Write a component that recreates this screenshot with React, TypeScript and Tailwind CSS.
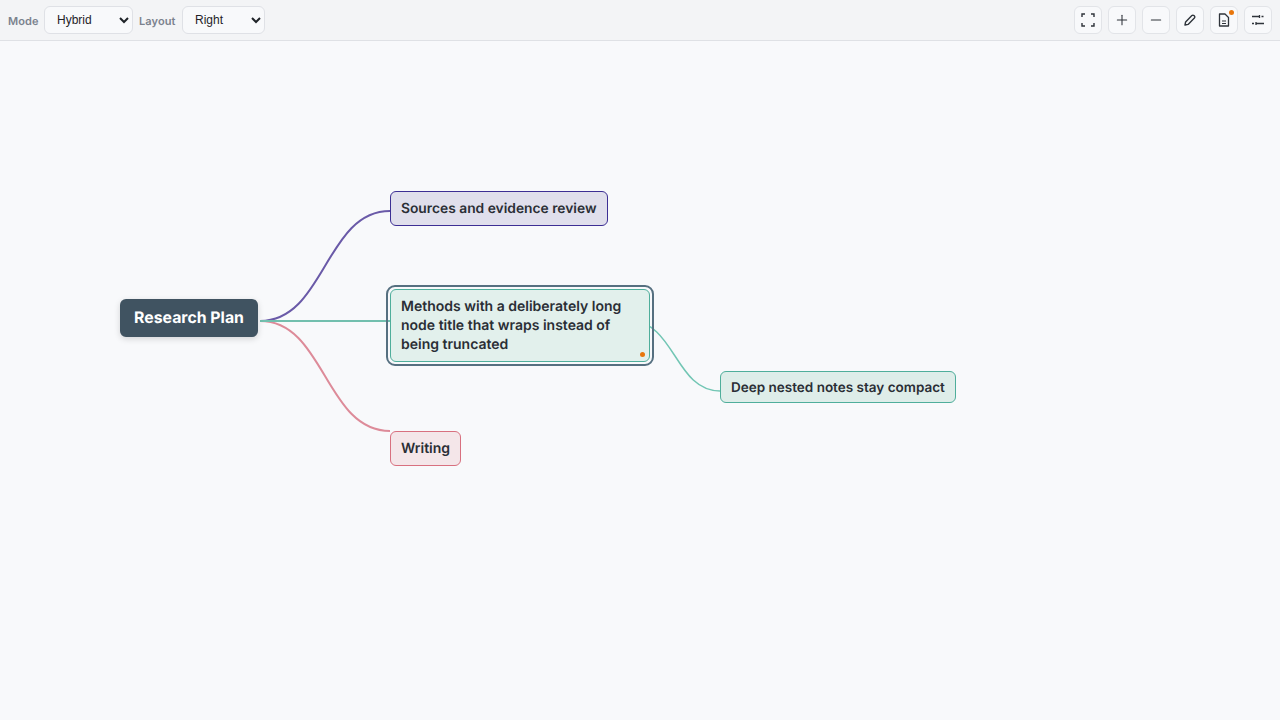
import React from "react";
import { Plus, Minus } from "lucide-react";

const btn = "relative w-[28px] h-[28px] flex items-center justify-center rounded-md border border-[#e2e4e8] bg-[#f8f9fb] text-[#2f343b]";
const sel = "h-[28px] rounded-md border border-[#dfe1e6] bg-[#f8f9fb] text-[12px] text-[#1f2328] pl-2 pr-0.5 font-['Liberation_Sans',sans-serif]";
const lab = "text-[11px] font-semibold text-[#7b828e] mt-[4px] tracking-[0.01em]";
const node = "absolute rounded-md border font-semibold text-[#2a2e35] leading-[19px] px-[10px]";

export default function App() {
  return (
    <div className="w-[1280px] h-[720px] flex flex-col overflow-hidden bg-[#f8f9fb] font-['Inter',sans-serif] [text-rendering:geometricPrecision] antialiased">
      <div className="h-[41px] shrink-0 flex items-center justify-between px-2 pb-px bg-[#f3f4f6] border-b border-[#dfe1e5]">
        <div className="flex items-center gap-1.5">
          <span className={`${lab} w-[30px]`}>Mode</span>
          <select className={`${sel} w-[89px]`} defaultValue="Hybrid"><option>Hybrid</option><option>Outline</option></select>
          <span className={`${lab} w-[37px]`}>Layout</span>
          <select className={`${sel} w-[83px]`} defaultValue="Right"><option>Right</option><option>Left</option></select>
        </div>
        <div className="flex items-center gap-1.5">
          <button className={btn}>
            <svg width="14" height="14" viewBox="0 0 14 14" fill="none" stroke="currentColor" strokeWidth="1.4">
              <path d="M1 4V1H4M10 1H13V4M13 10V13H10M4 13H1V10" />
            </svg>
          </button>
          <button className={btn}><Plus size={16} strokeWidth={1.6} /></button>
          <button className={btn}><Minus size={16} strokeWidth={1.6} /></button>
          <button className={btn}>
            <svg width="14" height="14" viewBox="0 0 14 14" fill="none" stroke="currentColor" strokeWidth="1.4" strokeLinejoin="round">
              <path d="M2 12L2.6 8.9L8.9 2.6A1.4 1.4 0 0 1 10.9 2.6L11.4 3.1A1.4 1.4 0 0 1 11.4 5.1L5.1 11.4Z" />
            </svg>
          </button>
          <button className={btn}>
            <svg width="14" height="14" viewBox="0 0 14 14" fill="none" stroke="currentColor" strokeWidth="1.3" strokeLinejoin="round">
              <path d="M2.5 1H8L11.5 4.5V13H2.5Z" />
              <path d="M5 8H9M5 10.5H9" strokeWidth="1.1" />
            </svg>
            <span className="absolute top-[3px] right-[3px] w-[5px] h-[5px] rounded-full bg-[#e8760c]" />
          </button>
          <button className={btn}>
            <svg width="14" height="14" viewBox="0 0 14 14" fill="none" stroke="currentColor" strokeWidth="1.3">
              <path d="M1 3.5H8M8.5 2V5M10.5 3.5H12.5" />
              <path d="M1 10.5H3M5 9V12M5.5 10.5H13" />
            </svg>
          </button>
        </div>
      </div>
      <div className="relative flex-1">
        <svg className="absolute left-0 top-0" width="1280" height="679" viewBox="0 41 1280 679" fill="none">
          <path d="M260 321C325 321 325 211 390 211" stroke="#6a5aa8" strokeWidth="2" />
          <path d="M260 321C325 321 325 431 390 431" stroke="#dd8b99" strokeWidth="2" />
          <path d="M260 321H390" stroke="#72bfae" strokeWidth="2" />
          <path d="M630 321C675 321 675 391 720 391" stroke="#72c6b4" strokeWidth="1.5" />
        </svg>
        <div className="absolute left-[120px] top-[258px] w-[138px] h-[38px] rounded-md bg-[#405361] text-white text-[15.85px] font-bold flex items-center justify-center pb-px shadow-[0_2px_6px_rgba(0,0,0,0.15)]">Research Plan</div>
        <div className={`${node} left-[390px] top-[150px] h-[35px] flex items-center pt-px text-[13.8px] border-[#3d2f94] bg-[#e0dfec]`}>Sources and evidence review</div>
        <div className="absolute left-[386px] top-[244px] w-[268px] h-[81px] rounded-[9px] border-2 border-[#567080]" />
        <div className={`${node} left-[390px] top-[248px] w-[260px] h-[73px] pt-[6.5px] text-[14px] border-[#4fae9b] bg-[#e2f0ec]`}>
          Methods with a deliberately long node title that wraps instead of being truncated
          <span className="absolute right-[4px] bottom-[4px] w-[5px] h-[5px] rounded-full bg-[#e8760c]" />
        </div>
        <div className={`${node} left-[720px] top-[330px] h-[32px] flex items-center pt-[2px] text-[13.5px] border-[#4fae9b] bg-[#deede9]`}>Deep nested notes stay compact</div>
        <div className={`${node} left-[390px] top-[390px] h-[35px] flex items-center pb-px text-[14px] border-[#d8707f] bg-[#f4e6e9]`}>Writing</div>
      </div>
    </div>
  );
}
